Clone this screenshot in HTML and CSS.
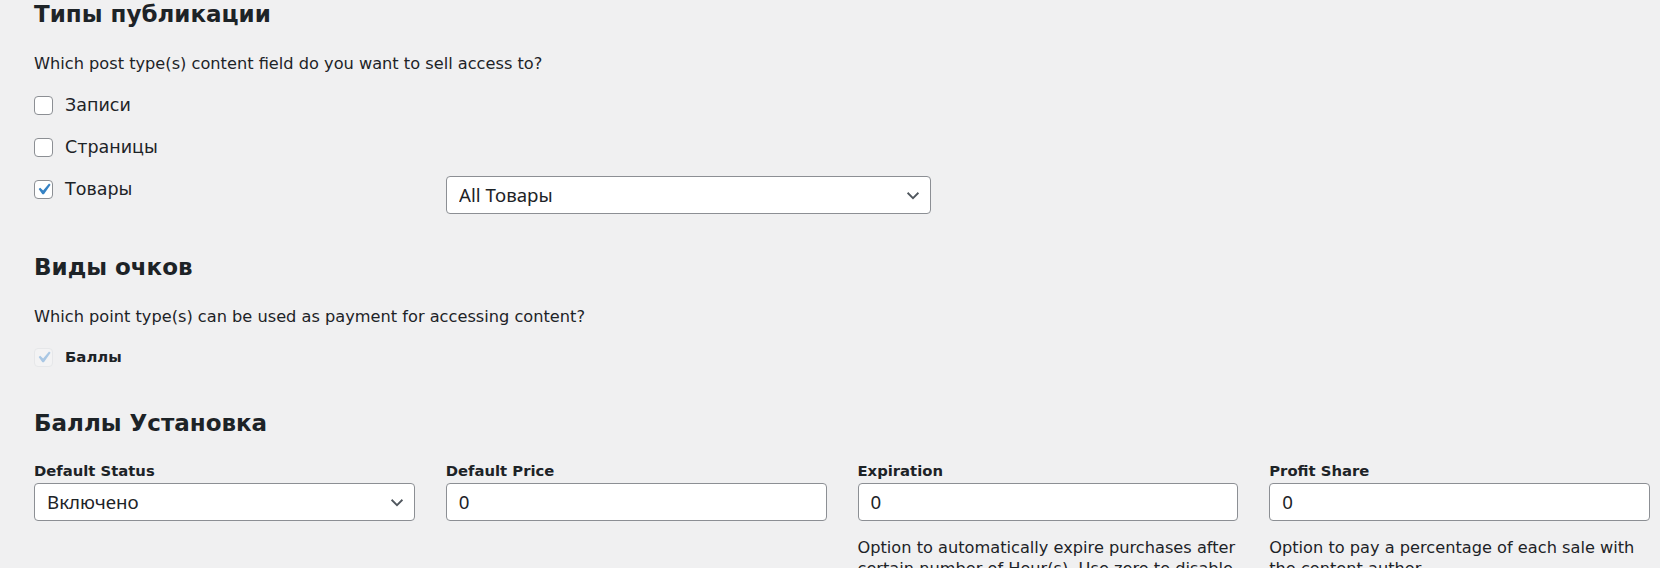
FILE: index.html
```html
<!DOCTYPE html>
<html lang="ru">
<head>
    <meta charset="UTF-8">
    <meta name="viewport" content="width=device-width, initial-scale=1.0">
    <title>Sell Content</title>
    <link rel="stylesheet" href="styles.css">
</head>
<body>
    <div class="wrap">
        <h2 class="section-title">Типы публикации</h2>
        <p class="hint">Which post type(s) content field do you want to sell access to?</p>

        <div class="type-list">
            <div class="type-row">
                <label class="check">
                    <span class="box"></span>
                    <span>Записи</span>
                </label>
            </div>
            <div class="type-row">
                <label class="check">
                    <span class="box"></span>
                    <span>Страницы</span>
                </label>
            </div>
            <div class="type-row">
                <label class="check">
                    <span class="box">
                        <svg viewBox="0 0 20 20"><path d="M14.83 4.89l1.34.94-5.81 8.38H9.02L5.78 9.67l1.34-1.25 2.57 2.4z"/></svg>
                    </span>
                    <span>Товары</span>
                </label>
                <select class="field select-wide">
                    <option>All Товары</option>
                </select>
            </div>
        </div>

        <h2 class="section-title spaced">Виды очков</h2>
        <p class="hint">Which point type(s) can be used as payment for accessing content?</p>

        <div class="type-row first">
            <label class="check disabled">
                <span class="box">
                    <svg viewBox="0 0 20 20"><path d="M14.83 4.89l1.34.94-5.81 8.38H9.02L5.78 9.67l1.34-1.25 2.57 2.4z"/></svg>
                </span>
                <strong>Баллы</strong>
            </label>
        </div>

        <h2 class="section-title spaced setup-title">Баллы Установка</h2>

        <div class="setup-grid">
            <div class="setup-col">
                <label class="field-label">Default Status</label>
                <select class="field">
                    <option>Включено</option>
                </select>
            </div>
            <div class="setup-col">
                <label class="field-label">Default Price</label>
                <input class="field" type="text" value="0">
            </div>
            <div class="setup-col">
                <label class="field-label">Expiration</label>
                <input class="field" type="text" value="0">
                <p class="description">Option to automatically expire purchases after certain number of Hour(s). Use zero to disable.</p>
            </div>
            <div class="setup-col">
                <label class="field-label">Profit Share</label>
                <input class="field" type="text" value="0">
                <p class="description">Option to pay a percentage of each sale with the content author.</p>
            </div>
        </div>
    </div>
</body>
</html>
```

FILE: styles.css
```css
body {
    margin: 0;
    background: #f0f0f1;
    color: #1d2327;
    font-family: "DejaVu Sans", sans-serif;
    font-size: 16.2px;
    line-height: 21px;
}
.wrap {
    padding: 0 10px 0 34px;
}
.section-title {
    margin: 0;
    font-size: 23px;
    line-height: 28px;
    font-weight: bold;
}
.section-title.spaced {
    margin-top: 39px;
}
.section-title.setup-title {
    margin-top: 40px;
}
.hint {
    margin: 25px 0 0;
}
.type-list {
    margin-top: 19px;
}
.type-row {
    display: flex;
    align-items: flex-start;
    margin-top: 18px;
}
.type-row:first-child {
    margin-top: 0;
}
.type-row.first {
    margin-top: 18px;
}
.check {
    display: flex;
    align-items: center;
    width: 412px;
    height: 24px;
    gap: 12px;
    font-size: 17.5px;
}
.check strong {
    font-size: 14.9px;
}
.box {
    width: 17px;
    height: 17px;
    border: 1px solid #8c8f94;
    border-radius: 4px;
    background: #fff;
    display: flex;
    align-items: center;
    justify-content: center;
    overflow: visible;
}
.box svg {
    width: 23px;
    height: 23px;
    flex: none;
    fill: #3582c4;
}
.check.disabled .box {
    border-color: #e6e7e9;
    background: #f3f3f4;
}
.check.disabled .box svg {
    fill: #a9c7e4;
}
.field {
    box-sizing: border-box;
    width: 100%;
    height: 38px;
    margin: 0;
    padding: 0 12px 2px;
    border: 1px solid #8c8f94;
    border-radius: 4px;
    background: #fff;
    color: #1d2327;
    font-family: "Noto Sans", Arial, sans-serif;
    font-size: 18.7px;
}
select.field {
    appearance: none;
    padding-right: 32px;
    background: #fff url("data:image/svg+xml;charset=US-ASCII,%3Csvg%20width%3D%2220%22%20height%3D%2220%22%20xmlns%3D%22http%3A%2F%2Fwww.w3.org%2F2000%2Fsvg%22%3E%3Cpath%20d%3D%22M4%207.5l6%206%206-6%22%20fill%3D%22none%22%20stroke%3D%22%2350575e%22%20stroke-width%3D%222%22%2F%3E%3C%2Fsvg%3E") no-repeat right 8px top 52%;
    background-size: 18px 18px;
}
.select-wide {
    width: 485px;
    margin-top: -1px;
}
.setup-grid {
    display: grid;
    grid-template-columns: repeat(4, 1fr);
    column-gap: 31px;
    margin-top: 24px;
}
.field-label {
    display: block;
    font-size: 14.8px;
    line-height: 20px;
    font-weight: bold;
    margin-bottom: 2px;
}
.description {
    margin: 16px 0 0;
    line-height: 21px;
}
```
